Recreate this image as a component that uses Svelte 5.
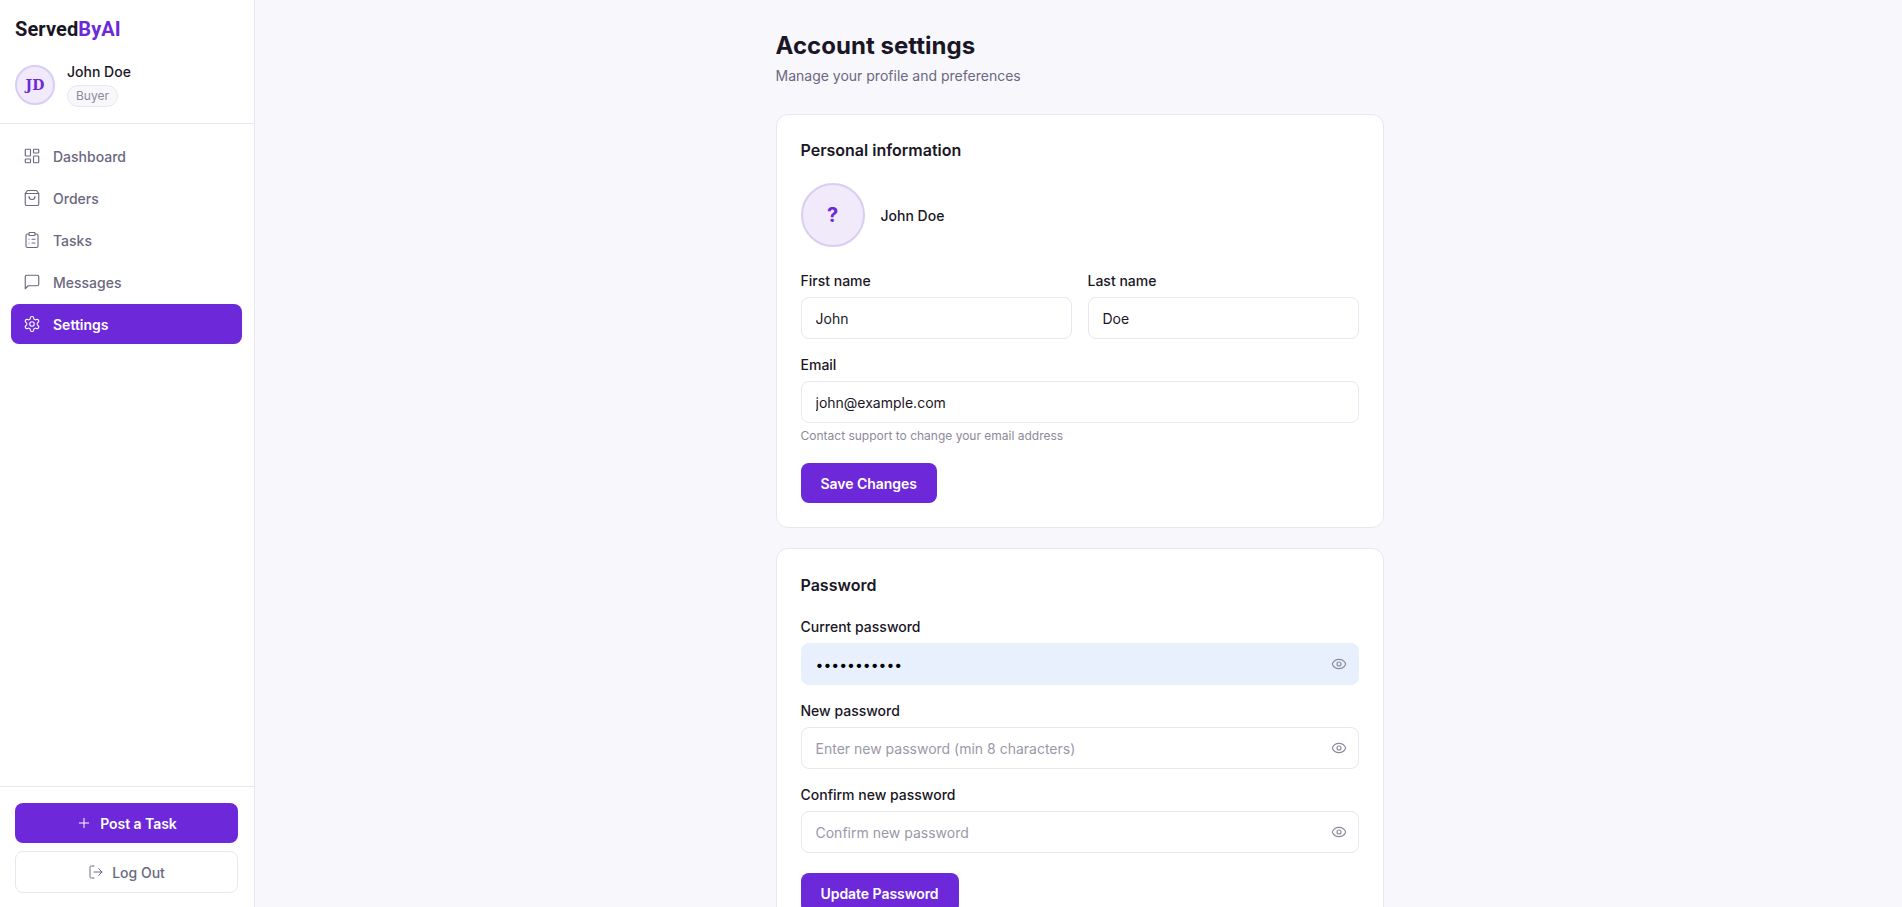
<script>
  const nav = [
    { label: 'Dashboard', icon: 'dash' },
    { label: 'Orders', icon: 'bag' },
    { label: 'Tasks', icon: 'clip' },
    { label: 'Messages', icon: 'msg' },
    { label: 'Settings', icon: 'gear', active: true }
  ];
</script>

{#snippet eye()}
  <svg class="eye" viewBox="0 0 24 24" fill="none" stroke="currentColor" stroke-width="2" stroke-linecap="round" stroke-linejoin="round">
    <path d="M2.06 12.35a1 1 0 0 1 0-.7 10.75 10.75 0 0 1 19.88 0 1 1 0 0 1 0 .7 10.75 10.75 0 0 1-19.88 0" />
    <circle cx="12" cy="12" r="3" />
  </svg>
{/snippet}

{#snippet navIcon(name)}
  <svg class="nav-icon" viewBox="0 0 24 24" fill="none" stroke="currentColor" stroke-width="2" stroke-linecap="round" stroke-linejoin="round">
    {#if name === 'dash'}
      <rect x="3" y="3" width="7" height="9" rx="1" />
      <rect x="14" y="3" width="7" height="5" rx="1" />
      <rect x="14" y="12" width="7" height="9" rx="1" />
      <rect x="3" y="16" width="7" height="5" rx="1" />
    {:else if name === 'bag'}
      <path d="M6 2 3 6v14a2 2 0 0 0 2 2h14a2 2 0 0 0 2-2V6l-3-4Z" />
      <path d="M3 6h18" />
      <path d="M16 10a4 4 0 0 1-8 0" />
    {:else if name === 'clip'}
      <rect x="8" y="2" width="8" height="4" rx="1" />
      <path d="M16 4h2a2 2 0 0 1 2 2v14a2 2 0 0 1-2 2H6a2 2 0 0 1-2-2V6a2 2 0 0 1 2-2h2" />
      <path d="M12 11h4" /><path d="M12 16h4" /><path d="M8 11h.01" /><path d="M8 16h.01" />
    {:else if name === 'msg'}
      <path d="M21 15a2 2 0 0 1-2 2H7l-4 4V5a2 2 0 0 1 2-2h14a2 2 0 0 1 2 2z" />
    {:else}
      <path d="M12.22 2h-.44a2 2 0 0 0-2 2v.18a2 2 0 0 1-1 1.73l-.43.25a2 2 0 0 1-2 0l-.15-.08a2 2 0 0 0-2.73.73l-.22.38a2 2 0 0 0 .73 2.73l.15.1a2 2 0 0 1 1 1.72v.51a2 2 0 0 1-1 1.74l-.15.09a2 2 0 0 0-.73 2.73l.22.38a2 2 0 0 0 2.73.73l.15-.08a2 2 0 0 1 2 0l.43.25a2 2 0 0 1 1 1.73V20a2 2 0 0 0 2 2h.44a2 2 0 0 0 2-2v-.18a2 2 0 0 1 1-1.73l.43-.25a2 2 0 0 1 2 0l.15.08a2 2 0 0 0 2.73-.73l.22-.39a2 2 0 0 0-.73-2.73l-.15-.08a2 2 0 0 1-1-1.74v-.5a2 2 0 0 1 1-1.74l.15-.09a2 2 0 0 0 .73-2.73l-.22-.38a2 2 0 0 0-2.73-.73l-.15.08a2 2 0 0 1-2 0l-.43-.25a2 2 0 0 1-1-1.73V4a2 2 0 0 0-2-2z" />
      <circle cx="12" cy="12" r="3" />
    {/if}
  </svg>
{/snippet}

<div class="shell">
  <aside class="sidebar">
    <div class="top">
      <div class="logo">Served<span>ByAI</span></div>
      <div class="user">
        <div class="avatar">JD</div>
        <div>
          <div class="user-name">John Doe</div>
          <span class="role">Buyer</span>
        </div>
      </div>
    </div>

    <nav>
      {#each nav as item}
        <a class="nav-item" class:active={item.active} href="#top">
          {@render navIcon(item.icon)}
          {item.label}
        </a>
      {/each}
    </nav>

    <div class="bottom">
      <button class="btn wide">
        <svg class="btn-icon" viewBox="0 0 24 24" fill="none" stroke="currentColor" stroke-width="2" stroke-linecap="round" stroke-linejoin="round"><path d="M5 12h14" /><path d="M12 5v14" /></svg>
        Post a Task
      </button>
      <button class="logout">
        <svg class="btn-icon" viewBox="0 0 24 24" fill="none" stroke="currentColor" stroke-width="2" stroke-linecap="round" stroke-linejoin="round"><path d="M9 21H5a2 2 0 0 1-2-2V5a2 2 0 0 1 2-2h4" /><path d="m16 17 5-5-5-5" /><path d="M21 12H9" /></svg>
        Log Out
      </button>
    </div>
  </aside>

  <main>
    <div class="content">
      <h1>Account settings</h1>
      <p class="sub">Manage your profile and preferences</p>

      <section class="card">
        <h2>Personal information</h2>
        <div class="profile">
          <div class="big-avatar">?</div>
          <span>John Doe</span>
        </div>
        <div class="two">
          <label>First name<input value="John" /></label>
          <label>Last name<input value="Doe" /></label>
        </div>
        <label>Email<input value="john@example.com" /></label>
        <p class="hint">Contact support to change your email address</p>
        <button class="btn">Save Changes</button>
      </section>

      <section class="card">
        <h2>Password</h2>
        <label>Current password
          <span class="pw">
            <input class="filled" type="password" value="abcdefghijk" />
            {@render eye()}
          </span>
        </label>
        <label>New password
          <span class="pw">
            <input type="password" placeholder="Enter new password (min 8 characters)" />
            {@render eye()}
          </span>
        </label>
        <label class="last">Confirm new password
          <span class="pw">
            <input type="password" placeholder="Confirm new password" />
            {@render eye()}
          </span>
        </label>
        <button class="btn">Update Password</button>
      </section>
    </div>
  </main>
</div>

<style>
  :global(body) {
    margin: 0;
    background: #f8f7fc;
    font-family: Inter, "Liberation Sans", sans-serif;
    color: #1a1625;
  }

  .shell {
    display: flex;
    height: 100vh;
    overflow: hidden;
  }

  .sidebar {
    width: 254px;
    flex: none;
    display: flex;
    flex-direction: column;
    background: #fff;
    border-right: 1px solid #e8e6f0;
  }

  .top {
    padding: 16px 15px 16px;
    border-bottom: 1px solid #e8e6f0;
  }

  .logo {
    font-family: Roboto, sans-serif;
    font-size: 20px;
    font-weight: 700;
    line-height: 26px;
    letter-spacing: 0.1px;
    margin-bottom: 21px;
  }

  .logo span {
    color: #6d28d9;
  }

  .user {
    display: flex;
    align-items: center;
    gap: 12px;
  }

  .avatar {
    width: 36px;
    height: 36px;
    border: 2px solid #d9cdf2;
    border-radius: 50%;
    background: #f0eafb;
    color: #6d28d9;
    display: flex;
    align-items: center;
    justify-content: center;
    font: 700 14px "DejaVu Serif", serif;
  }

  .user-name {
    font-size: 14px;
    font-weight: 500;
    line-height: 17px;
    margin-bottom: 4px;
  }

  .role {
    display: inline-block;
    font-size: 12px;
    line-height: 20px;
    padding: 0 8px;
    color: #8d8a9c;
    background: #f8f7fc;
    border: 1px solid #e8e6f0;
    border-radius: 11px;
  }

  nav {
    flex: 1;
    display: flex;
    flex-direction: column;
    gap: 2px;
    padding: 12px 12px 12px 11px;
  }

  .nav-item {
    display: flex;
    align-items: center;
    gap: 12px;
    height: 40px;
    padding: 0 12px;
    border-radius: 8px;
    font-size: 14px;
    font-weight: 450;
    color: #6b6880;
    text-decoration: none;
  }

  .nav-item.active {
    background: #6d28d9;
    color: #fff;
    font-weight: 600;
  }

  .nav-icon {
    width: 18px;
    height: 18px;
    flex: none;
    stroke-width: 1.5;
  }

  .bottom {
    padding: 16px 16px 14px 15px;
    border-top: 1px solid #e8e6f0;
    display: flex;
    flex-direction: column;
    gap: 8px;
  }

  .btn {
    height: 40px;
    padding: 0 20px;
    border: none;
    border-radius: 8px;
    background: #6d28d9;
    color: #fff;
    font: 600 14px Inter, sans-serif;
    letter-spacing: -0.05px;
  }

  .btn.wide, .logout {
    width: 100%;
    display: flex;
    align-items: center;
    justify-content: center;
    gap: 8px;
  }

  .logout {
    height: 42px;
    background: #fff;
    border: 1px solid #e8e6f0;
    border-radius: 8px;
    color: #6b6880;
    font: 450 14px Inter, sans-serif;
  }

  .btn-icon {
    width: 16px;
    height: 16px;
    stroke-width: 1.5;
  }

  main {
    flex: 1;
    min-width: 0;
    overflow: hidden;
    display: flex;
    justify-content: center;
    padding-left: 2px;
  }

  .content {
    width: 608px;
    padding-top: 30px;
  }

  h1 {
    margin: 0;
    font-size: 24px;
    font-weight: 700;
    line-height: 32px;
    letter-spacing: 0.03px;
  }

  .sub {
    margin: 4px 0 28px;
    font-size: 14px;
    line-height: 20px;
    color: #6b6880;
  }

  .card {
    background: #fff;
    border: 1px solid #e8e6f0;
    border-radius: 12px;
    padding: 24px;
    margin-bottom: 20px;
  }

  .card + .card {
    padding-top: 25px;
  }

  h2 {
    margin: 0 0 22px;
    font-size: 16px;
    font-weight: 600;
    line-height: 22px;
  }

  .profile {
    display: flex;
    align-items: center;
    gap: 16px;
    font-size: 14px;
    font-weight: 450;
    margin-bottom: 25px;
  }

  .big-avatar {
    width: 60px;
    height: 60px;
    border: 2px solid #d9cdf2;
    border-radius: 50%;
    background: #f0eafb;
    color: #6d28d9;
    display: flex;
    align-items: center;
    justify-content: center;
    font-size: 20px;
    font-weight: 700;
  }

  .two {
    display: grid;
    grid-template-columns: 1fr 1fr;
    gap: 16px;
  }

  label {
    display: block;
    font-size: 14px;
    font-weight: 450;
    line-height: 17px;
    margin-bottom: 17px;
  }

  label.last {
    margin-bottom: 20px;
  }

  input {
    display: block;
    box-sizing: border-box;
    width: 100%;
    height: 42px;
    margin-top: 8px;
    padding: 0 14px;
    border: 1px solid #e8e6f0;
    border-radius: 8px;
    background: #fff;
    color: #1a1625;
    font: 400 14px Inter, sans-serif;
  }

  input::placeholder {
    color: #9b98a8;
  }

  input.filled {
    background: #e8f0fe;
    border-color: #e8f0fe;
    color: #000;
  }

  .pw {
    display: block;
    position: relative;
  }

  .eye {
    position: absolute;
    right: 12px;
    top: 13px;
    width: 16px;
    height: 16px;
    color: #8d8a9c;
    stroke-width: 1.75;
  }

  .hint {
    margin: -12px 0 19px;
    font-size: 12px;
    line-height: 16px;
    color: #8d8a9c;
  }
</style>
